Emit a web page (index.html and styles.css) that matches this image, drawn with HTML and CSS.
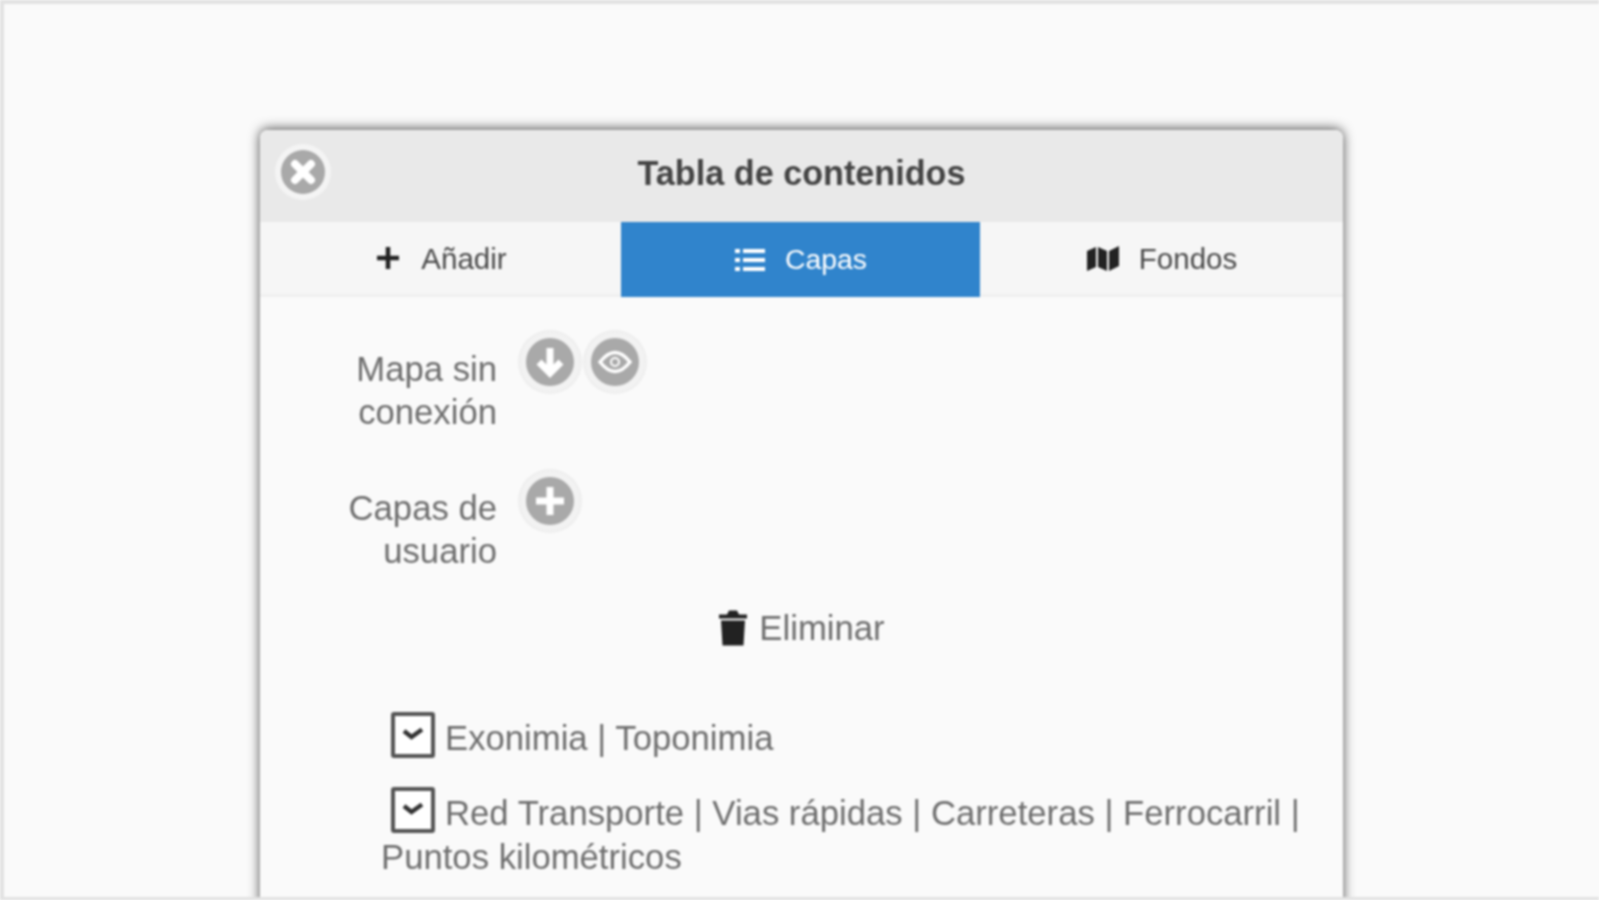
FILE: index.html
```html
<!DOCTYPE html>
<html lang="es">
<head>
  <meta charset="UTF-8">
  <meta name="viewport" content="width=device-width, initial-scale=1.0">
  <title>Tabla de contenidos</title>
  <link rel="stylesheet" href="styles.css">
</head>
<body>
  <div class="frame">
    <div class="panel">
      <div class="panel-header">
        <button class="round-btn close-btn" aria-label="Cerrar">
          <svg viewBox="0 0 44 44"><path d="M14 14 L30 30 M30 14 L14 30" stroke="#fff" stroke-width="8" stroke-linecap="round" fill="none"/></svg>
        </button>
        <h1>Tabla de contenidos</h1>
      </div>

      <div class="tabs">
        <div class="tab">
          <svg class="tab-icon" viewBox="0 0 28 28"><path d="M14 3 V25 M3 14 H25" stroke="#222" stroke-width="4.5" fill="none"/></svg>
          <span>Añadir</span>
        </div>
        <div class="tab active">
          <svg class="tab-icon" viewBox="0 0 32 28"><path d="M1 3 h5 v4 h-5z M1 12 h5 v4 h-5z M1 21 h5 v4 h-5z M9 3 h22 v4 h-22z M9 12 h22 v4 h-22z M9 21 h22 v4 h-22z" fill="#fff"/></svg>
          <span>Capas</span>
        </div>
        <div class="tab">
          <svg class="tab-icon" viewBox="0 0 34 28"><path d="M1 7 L10 3 V23 L1 27z M12 3 L21 7 V27 L12 23z M23 7 L33 2 V22 L23 27z" fill="#222"/></svg>
          <span>Fondos</span>
        </div>
      </div>

      <div class="panel-body">
        <div class="option-row">
          <div class="option-label">Mapa sin conexión</div>
          <div class="option-btns">
            <button class="round-btn" aria-label="Descargar">
              <svg viewBox="0 0 48 48"><path d="M24 10 V34 M13 24 L24 35 L35 24" stroke="#fff" stroke-width="7" fill="none"/></svg>
            </button>
            <button class="round-btn" aria-label="Ver">
              <svg viewBox="0 0 48 48"><path d="M9 24 Q24 5 39 24 Q24 43 9 24z" fill="none" stroke="#fff" stroke-width="3.5"/><circle cx="24" cy="24" r="4" fill="none" stroke="#fff" stroke-width="2"/></svg>
            </button>
          </div>
        </div>

        <div class="option-row">
          <div class="option-label">Capas de usuario</div>
          <div class="option-btns">
            <button class="round-btn" aria-label="Añadir capa">
              <svg viewBox="0 0 48 48"><path d="M24 10 V38 M10 24 H38" stroke="#fff" stroke-width="7" fill="none"/></svg>
            </button>
          </div>
        </div>

        <div class="delete-row">
          <svg class="trash" viewBox="0 0 30 36"><path d="M1 5 h8 l2 -4 h8 l2 4 h8 v4 h-28z M3 11 h24 l-1.5 25 h-21z" fill="#222"/></svg>
          <span>Eliminar</span>
        </div>

        <ul class="layers">
          <li><span class="check"><svg viewBox="0 0 24 24"><path d="M6 10 L11 14 L18 9" stroke="#333" stroke-width="3" fill="none"/></svg></span>Exonimia | Toponimia</li>
          <li><span class="check"><svg viewBox="0 0 24 24"><path d="M6 10 L11 14 L18 9" stroke="#333" stroke-width="3" fill="none"/></svg></span>Red Transporte | Vias rápidas | Carreteras | Ferrocarril | Puntos kilométricos</li>
        </ul>
      </div>
    </div>
  </div>
</body>
</html>
```

FILE: styles.css
```css
/* General */
body {
  margin: 0;
  background: #fafafa;
  font-family: "Liberation Sans", Arial, sans-serif;
  color: #6e6e6e;
}

.frame {
  box-sizing: border-box;
  height: 900px;
  padding: 126px 0 0 256px;
  overflow: hidden;
  background: #fafafa;
  border-top: 4px solid #e2e2e2;
  border-left: 4px solid #e2e2e2;
  border-bottom: 3px solid #e2e2e2;
  filter: blur(0.8px);
}

/* Panel */
.panel {
  width: 1083px;
  min-height: 800px;
  background: #fafafa;
  border-radius: 8px 8px 0 0;
  box-shadow: 0 -1px 12px rgba(0, 0, 0, 0.7);
}

.panel-header {
  position: relative;
  box-sizing: border-box;
  height: 92px;
  padding-bottom: 6px;
  background: #e9e9e9;
  border-radius: 8px 8px 0 0;
  display: flex;
  align-items: center;
  justify-content: center;
}

.panel-header h1 {
  margin: 0;
  font-size: 34.2px;
  color: #444;
}

/* Round buttons */
.round-btn {
  width: 48px;
  height: 48px;
  padding: 0;
  border: none;
  border-radius: 50%;
  background: #a9a9a9;
  box-shadow: 0 0 0 6px #f2f2f2, 0 0 0 8px #eeeeee;
}

.round-btn svg {
  display: block;
  width: 100%;
  height: 100%;
}

.close-btn {
  position: absolute;
  left: 21px;
  top: 20px;
  width: 44px;
  height: 44px;
  box-shadow: 0 0 0 6px #f4f4f4;
}

/* Tabs */
.tabs {
  display: flex;
  height: 75px;
  background: #f6f6f6;
  border-bottom: 3px solid #f0f0f0;
  box-sizing: border-box;
}

.tab {
  flex: 1;
  display: flex;
  align-items: center;
  justify-content: center;
  gap: 19px;
  font-size: 29.5px;
  color: #4a4a4a;
}

.tab span {
  padding-top: 2px;
}

.tab:first-child {
  flex: 0 0 361px;
}

.tab.active {
  flex: 0 0 359px;
  margin-bottom: -3px;
  background: #3084cc;
  color: #fff;
  font-size: 28.4px;
}

.tab.active span {
  padding-top: 0;
}

.tab-icon {
  height: 28px;
  width: auto;
}

/* Body */
.panel-body {
  padding: 41px 0 0 121px;
  font-size: 34.7px;
  line-height: 43.5px;
}

.option-row {
  display: flex;
  gap: 29px;
  margin-bottom: 43px;
  margin-left: -121px;
}

.option-label {
  box-sizing: border-box;
  width: 237px;
  padding: 10px 0 0 80px;
  line-height: 43px;
  text-align: right;
}

.option-btns {
  display: flex;
  gap: 17px;
}

.delete-row {
  display: flex;
  align-items: center;
  justify-content: center;
  gap: 11px;
  margin: -9px 0 61px -121px;
}

.trash {
  width: 30px;
  height: 37px;
  margin-top: -2px;
}

/* Layer list */
.layers {
  list-style: none;
  margin: 0;
  padding: 0 40px 0 0;
}

.layers li {
  margin-bottom: 27px;
  text-indent: 10px;
}

.check {
  display: inline-block;
  box-sizing: border-box;
  width: 44px;
  height: 46px;
  margin-right: 10px;
  vertical-align: -8px;
  border: 4px solid #555;
  border-radius: 3px;
  background: #fff;
  text-indent: 0;
}

.check svg {
  display: block;
  width: 36px;
  height: 36px;
}
```
